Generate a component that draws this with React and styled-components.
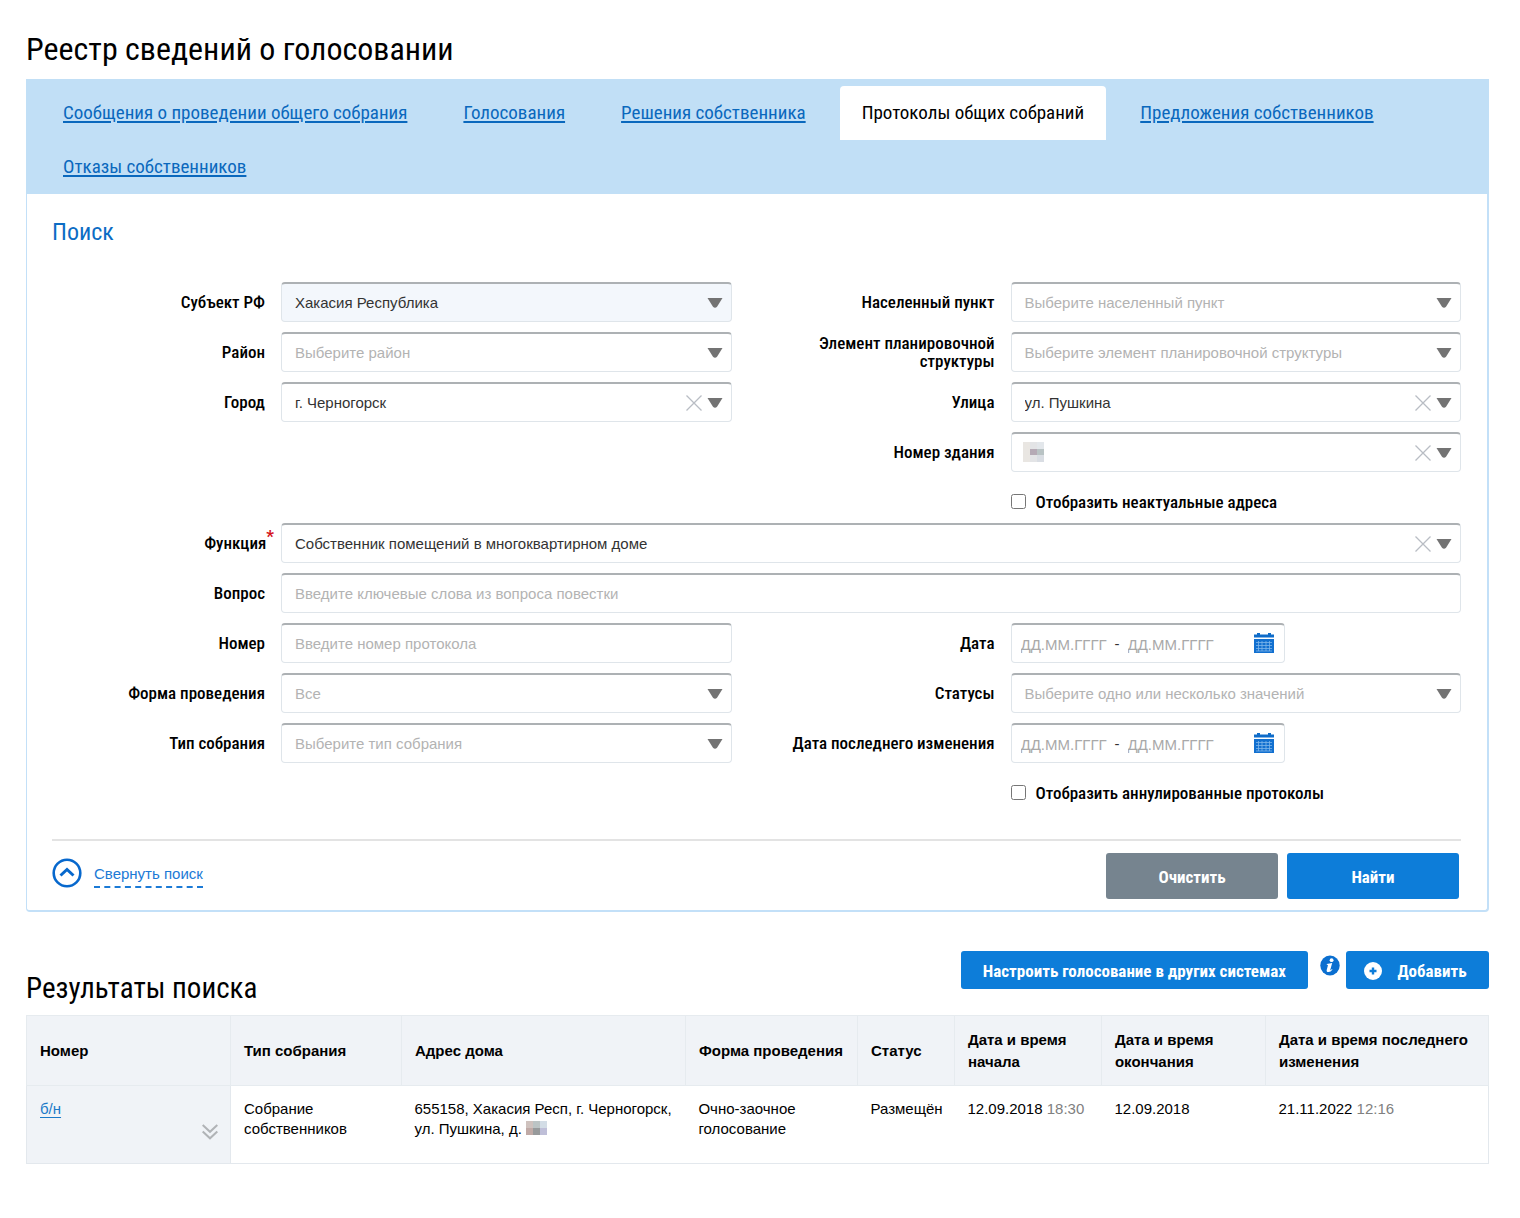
import React, { useId, useState } from "react";
import styled, { createGlobalStyle, css } from "styled-components";

const condensed = '"Roboto Condensed", Roboto, "Liberation Sans", sans-serif';
const sans = '"Liberation Sans", Arial, sans-serif';

const GlobalStyle = createGlobalStyle`
  *, *::before, *::after { box-sizing: border-box; }
  body { margin: 0; background: #fff; color: #000; font: 15px/20px ${sans}; }
  h1, h2, p { margin: 0; }
`;

const Page = styled.main`
  padding: 30px 31px 56px 26px;
`;

const PageTitle = styled.h1`
  font: 400 32px/38px ${condensed};
  margin-bottom: 11px;
`;

/* ---------- tabs ---------- */

const Tabs = styled.nav`
  display: flex;
  flex-wrap: wrap;
  column-gap: 12px;
  padding: 7px 15px 0;
  background: #c1dff6;
`;

const Tab = styled.a`
  padding: 0 22px;
  border-radius: 4px 4px 0 0;
  font: 400 19px/54px ${condensed};
  color: #0a68bd;
  text-decoration: underline;
  text-decoration-thickness: 2px;
  text-underline-offset: 2px;
  ${({ $active }) =>
    $active &&
    css`
      background: #fff;
      color: #000;
      text-decoration: none;
    `}
`;

/* ---------- search panel ---------- */

const SearchPanel = styled.form`
  padding: 24px 26px 11px 25px;
  border: solid #c3e0f8;
  border-width: 0 2px 2px 1px;
  border-radius: 0 0 4px 4px;
`;

const PanelTitle = styled.h2`
  margin-bottom: 36px;
  font: 400 24px/28px ${condensed};
  color: #0b6cc4;
`;

const Columns = styled.div`
  display: flex;
  gap: 16px;
`;

const Stack = styled.div`
  display: flex;
  flex-direction: column;
  gap: 10px;
  flex: 1 1 ${({ $basis }) => $basis || "auto"};
  min-width: 0;
`;

const Sections = styled.div`
  display: flex;
  flex-direction: column;
  gap: 10px;
  margin-bottom: 35px;
`;

const FieldRow = styled.div`
  display: grid;
  grid-template-columns: ${({ $label }) => $label}px minmax(0, 1fr);
  column-gap: 16px;
  align-items: center;
  min-height: 40px;
`;

const FieldLabel = styled.label`
  font: 500 17px/18px ${condensed};
  text-align: right;
`;

const Required = styled.sup`
  margin-right: -9px;
  font: 700 17px/0 ${condensed};
  color: #d4141c;
`;

const box = css`
  width: 100%;
  height: 40px;
  border: 1px solid #dfe5ea;
  border-top: 2px solid #adb1b4;
  border-radius: 4px;
  background: ${({ $filled }) => ($filled ? "#f3f7fc" : "#fff")};
`;

const control = css`
  ${box}
  padding: 0 13px;
  font: 15px/20px ${sans};
  color: ${({ $muted }) => ($muted ? "#b3b3b3" : "#333")};
`;

const TextInput = styled.input`
  ${control}
  &::placeholder { color: #b3b3b3; opacity: 1; }
`;

const SelectWrap = styled.div`
  position: relative;
`;

const Select = styled.select`
  ${control}
  appearance: none;
  display: block;
  padding-right: 52px;
`;

const SelectIcons = styled.span`
  position: absolute;
  inset: 1px 9px 0 auto;
  display: flex;
  align-items: center;
  gap: 5px;
  pointer-events: none;
`;

const ClearButton = styled.button`
  display: flex;
  padding: 0;
  border: 0;
  background: none;
  cursor: pointer;
  pointer-events: auto;
`;

const SelectMask = styled.span`
  position: absolute;
  left: 12px;
  top: 10px;
  display: flex;
`;

const DateBox = styled.div`
  ${box}
  display: flex;
  align-items: center;
  width: 274px;
  max-width: 100%;
  padding: 1px 10px 0 9px;
`;

const DateInput = styled.input`
  width: 90px;
  height: 24px;
  padding: 0;
  border: 0;
  background: none;
  font: 15px/20px ${sans};
  &::placeholder { color: #a9a9a9; opacity: 1; }
`;

const Dash = styled.span`
  width: 17px;
  padding-left: 4px;
  color: #333;
`;

const CalendarButton = styled.button`
  display: flex;
  margin-left: auto;
  padding: 0 0 2px;
  border: 0;
  background: none;
`;

const CheckRow = styled.div`
  display: flex;
  align-items: center;
  gap: 10px;
  height: 31px;
  padding: 8px 0 0 263px;
`;

const Checkbox = styled.input`
  width: 15px;
  height: 15px;
  margin: 0;
`;

const PanelFooter = styled.div`
  display: flex;
  align-items: center;
  justify-content: space-between;
  padding: 12px 2px 0 0;
  border-top: 2px solid #e3e3e3;
`;

const Collapse = styled.button`
  display: flex;
  align-items: center;
  gap: 12px;
  padding: 0 0 6px;
  border: 0;
  background: none;
  font: 15px/20px ${sans};
  color: #1b7ad6;
  cursor: pointer;
`;

const CollapseText = styled.span`
  padding: 5px 0 2px;
  border-bottom: 2px dashed #1b7ad6;
`;

const Actions = styled.div`
  display: flex;
  gap: 9px;
`;

const Button = styled.button`
  display: flex;
  align-items: center;
  justify-content: center;
  gap: 15px;
  height: ${({ $large }) => ($large ? 46 : 38)}px;
  min-width: ${({ $large }) => ($large ? 172 : 143)}px;
  padding: 2px 22px 0 ${({ $icon }) => ($icon ? 18 : 22)}px;
  border: 0;
  border-radius: 3px;
  background: ${({ $grey }) => ($grey ? "#76848f" : "#0d7dd9")};
  font: 700 17px/20px ${condensed};
  color: #fff;
  white-space: nowrap;
  cursor: pointer;
`;

/* ---------- results ---------- */

const ResultsHeader = styled.header`
  display: flex;
  justify-content: space-between;
  align-items: flex-start;
  margin: 39px 0 10px;
`;

const ResultsTitle = styled.h2`
  padding-top: 20px;
  font: 400 29px/34px ${condensed};
`;

const ResultsTools = styled.div`
  display: flex;
  align-items: flex-start;
`;

const InfoButton = styled.button`
  display: flex;
  padding: 4px 6px 0 12px;
  border: 0;
  background: none;
`;

const Table = styled.table`
  width: 100%;
  table-layout: fixed;
  border-collapse: collapse;
  border: 1px solid #e3e8ed;
`;

const Col = styled.col`
  width: ${({ $share }) => (($share / 1462) * 100).toFixed(3)}%;
`;

const HeadCell = styled.th`
  height: 70px;
  padding: 0 4px 0 13px;
  border: 1px solid #e6ebef;
  background: #f0f3f7;
  font: 700 15px/22px ${sans};
  text-align: left;
`;

const Cell = styled.td`
  height: 78px;
  padding: 13px 4px 0 13px;
  vertical-align: top;
  ${({ $tinted }) =>
    $tinted &&
    css`
      border-right: 1px solid #e3e8ed;
      background: #f0f3f7;
    `}
`;

const NumberCell = styled.div`
  display: flex;
  justify-content: space-between;
`;

const ExpandButton = styled.button`
  display: flex;
  padding: 25px 8px 0 0;
  border: 0;
  background: none;
`;

const RecordLink = styled.a`
  color: #1b7ac8;
  text-underline-offset: 3px;
`;

const Time = styled.span`
  color: #808080;
`;

const Mosaic = styled.svg`
  vertical-align: -1px;
`;

/* ---------- icons ---------- */

const Arrow = () => (
  <svg width="16" height="10" viewBox="0 0 16 10" aria-hidden="true">
    <path d="M.5 0h15L10 8.700Q8 10.600 6 8.700z" fill="#737373" />
  </svg>
);

const Cross = () => (
  <svg width="16" height="16" viewBox="0 0 16 16" aria-hidden="true">
    <path d="M.5.5l15 15M15.5.5l-15 15" stroke="#b9bdc4" strokeWidth="1.3" />
  </svg>
);

const Calendar = () => (
  <svg width="20" height="20" viewBox="0 0 20 20" aria-hidden="true">
    <path d="M0 1.5h3V0h3v1.5h8V0h3v1.5h3v3H0z" fill="#0f6cc9" />
    <path d="M0 6h20v14H0z" fill="#1270d0" />
    <path
      d="M2 9.5h16M2 12.5h16M2 15.5h16M2 18h16M4.500 8v10M8 8v10M12 8v10M15.5 8v10"
      stroke="#7db5ea"
      strokeWidth=".8"
    />
  </svg>
);

const ChevronCircle = () => (
  <svg width="30" height="30" viewBox="0 0 30 30" fill="none" stroke="#0768cd" aria-hidden="true">
    <circle cx="15" cy="15" r="13.3" strokeWidth="2.6" />
    <path d="M8.5 17.5L15 11.5l6.5 6" strokeWidth="3" />
  </svg>
);

const Info = () => (
  <svg width="20" height="21" viewBox="0 0 20 21" aria-hidden="true">
    <ellipse cx="10" cy="10.5" rx="9.7" ry="10" fill="#0b6fd0" />
    <circle cx="11.6" cy="5.2" r="1.9" fill="#fff" />
    <path
      d="M6.800 9c1.700-.3 3.600-.6 5.400-1l-1.900 6.800c-.2.900.5.600 1.600-.7l.6.5c-1.300 1.800-2.700 2.600-4.200 2.500-1.400-.1-1.900-.9-1.600-2.100l1.200-4.400c.1-.6-.2-.8-1.100-.8z"
      fill="#fff"
    />
  </svg>
);

const Plus = () => (
  <svg width="18" height="18" viewBox="0 0 18 18" aria-hidden="true">
    <circle cx="9" cy="9" r="9" fill="#fff" />
    <path d="M9 5.500v7M5.500 9h7" stroke="#0d7dd9" strokeWidth="2.400" />
  </svg>
);

const DoubleChevron = () => (
  <svg width="16" height="16" viewBox="0 0 16 16" fill="none" stroke="#b0b3b6" strokeWidth="2" aria-hidden="true">
    <path d="M.7 1L8 7.800 15.300 1M.7 7.500L8 14.300l7.300-6.800" />
  </svg>
);

const BuildingMask = () => (
  <svg width="21" height="20" viewBox="0 0 21 20" shapeRendering="crispEdges" aria-hidden="true">
    <path d="M0 0h21v20H0z" fill="#e3e4e6" />
    <path d="M0 0h7v20H0z" fill="#e9e6e2" />
    <path d="M14 0h7v7h-7z" fill="#e3e7eb" />
    <path d="M14 13h7v7h-7z" fill="#d9dde3" />
    <path d="M7 7h7v6H7z" fill="#b5aab5" />
    <path d="M14 7h7v6h-7z" fill="#b9c3c4" />
  </svg>
);

const HouseMask = () => (
  <Mosaic width="21" height="14" viewBox="0 0 21 14" shapeRendering="crispEdges" aria-hidden="true">
    <path d="M0 0h7v7H0z" fill="#cfc2be" />
    <path d="M7 0h7v7H7z" fill="#bcc4c4" />
    <path d="M14 0h7v7h-7z" fill="#d3dde6" />
    <path d="M0 7h7v7H0z" fill="#c0aaa6" />
    <path d="M7 7h7v7H7z" fill="#979a9b" />
    <path d="M14 7h7v7h-7z" fill="#bfbfd8" />
  </Mosaic>
);

/* ---------- fields ---------- */

const LEFT_LABEL = 213;
const RIGHT_LABEL = 247;

function SelectField({ label, labelWidth, value, placeholder, clearable, filled, required, mask }) {
  const id = useId();
  const [current, setCurrent] = useState(value || "");
  return (
    <FieldRow $label={labelWidth}>
      <FieldLabel htmlFor={id}>
        {label}
        {required && <Required>*</Required>}
      </FieldLabel>
      <SelectWrap>
        <Select
          id={id}
          value={current}
          $muted={!current}
          $filled={filled}
          onChange={(e) => setCurrent(e.target.value)}
        >
          <option value="">{placeholder || ""}</option>
          {value && <option>{value}</option>}
        </Select>
        {mask && <SelectMask>{mask}</SelectMask>}
        <SelectIcons>
          {clearable && (
            <ClearButton type="button" aria-label="Очистить поле" onClick={() => setCurrent("")}>
              <Cross />
            </ClearButton>
          )}
          <Arrow />
        </SelectIcons>
      </SelectWrap>
    </FieldRow>
  );
}

function TextField({ label, labelWidth, placeholder }) {
  const id = useId();
  return (
    <FieldRow $label={labelWidth}>
      <FieldLabel htmlFor={id}>{label}</FieldLabel>
      <TextInput id={id} placeholder={placeholder} />
    </FieldRow>
  );
}

function DateField({ label, labelWidth }) {
  const id = useId();
  return (
    <FieldRow $label={labelWidth}>
      <FieldLabel htmlFor={id}>{label}</FieldLabel>
      <DateBox>
        <DateInput id={id} placeholder="ДД.ММ.ГГГГ" />
        <Dash>-</Dash>
        <DateInput aria-label={`${label}, по`} placeholder="ДД.ММ.ГГГГ" />
        <CalendarButton type="button" aria-label="Открыть календарь">
          <Calendar />
        </CalendarButton>
      </DateBox>
    </FieldRow>
  );
}

function CheckField({ label }) {
  const id = useId();
  return (
    <CheckRow>
      <Checkbox type="checkbox" id={id} />
      <FieldLabel htmlFor={id}>{label}</FieldLabel>
    </CheckRow>
  );
}

/* ---------- data ---------- */

const tabs = [
  "Сообщения о проведении общего собрания",
  "Голосования",
  "Решения собственника",
  "Протоколы общих собраний",
  "Предложения собственников",
  "Отказы собственников",
];

const columns = [
  ["Номер", 204],
  ["Тип собрания", 171],
  ["Адрес дома", 284],
  ["Форма проведения", 172],
  ["Статус", 97],
  ["Дата и время начала", 147],
  ["Дата и время окончания", 164],
  ["Дата и время последнего изменения", 223],
];

export default function App() {
  return (
    <Page>
      <GlobalStyle />
      <PageTitle>Реестр сведений о голосовании</PageTitle>

      <Tabs>
        {tabs.map((name) => (
          <Tab key={name} href="#" $active={name === "Протоколы общих собраний"}>
            {name}
          </Tab>
        ))}
      </Tabs>

      <SearchPanel onSubmit={(e) => e.preventDefault()}>
        <PanelTitle>Поиск</PanelTitle>
        <Sections>
          <Columns>
            <Stack $basis="229px">
              <SelectField label="Субъект РФ" labelWidth={LEFT_LABEL} value="Хакасия Республика" filled />
              <SelectField label="Район" labelWidth={LEFT_LABEL} placeholder="Выберите район" />
              <SelectField label="Город" labelWidth={LEFT_LABEL} value="г. Черногорск" clearable />
            </Stack>
            <Stack $basis="263px">
              <SelectField label="Населенный пункт" labelWidth={RIGHT_LABEL} placeholder="Выберите населенный пункт" />
              <SelectField
                label={<>Элемент планировочной<br />структуры</>}
                labelWidth={RIGHT_LABEL}
                placeholder="Выберите элемент планировочной структуры"
              />
              <SelectField label="Улица" labelWidth={RIGHT_LABEL} value="ул. Пушкина" clearable />
              <SelectField label="Номер здания" labelWidth={RIGHT_LABEL} clearable mask={<BuildingMask />} />
              <CheckField label="Отобразить неактуальные адреса" />
            </Stack>
          </Columns>
          <Stack>
            <SelectField
              label="Функция"
              labelWidth={LEFT_LABEL}
              value="Собственник помещений в многоквартирном доме"
              clearable
              required
            />
            <TextField label="Вопрос" labelWidth={LEFT_LABEL} placeholder="Введите ключевые слова из вопроса повестки" />
          </Stack>
          <Columns>
            <Stack $basis="229px">
              <TextField label="Номер" labelWidth={LEFT_LABEL} placeholder="Введите номер протокола" />
              <SelectField label="Форма проведения" labelWidth={LEFT_LABEL} placeholder="Все" />
              <SelectField label="Тип собрания" labelWidth={LEFT_LABEL} placeholder="Выберите тип собрания" />
            </Stack>
            <Stack $basis="263px">
              <DateField label="Дата" labelWidth={RIGHT_LABEL} />
              <SelectField label="Статусы" labelWidth={RIGHT_LABEL} placeholder="Выберите одно или несколько значений" />
              <DateField label="Дата последнего изменения" labelWidth={RIGHT_LABEL} />
              <CheckField label="Отобразить аннулированные протоколы" />
            </Stack>
          </Columns>
        </Sections>
        <PanelFooter>
          <Collapse type="button">
            <ChevronCircle />
            <CollapseText>Свернуть поиск</CollapseText>
          </Collapse>
          <Actions>
            <Button type="reset" $large $grey>Очистить</Button>
            <Button type="submit" $large>Найти</Button>
          </Actions>
        </PanelFooter>
      </SearchPanel>

      <ResultsHeader>
        <ResultsTitle>Результаты поиска</ResultsTitle>
        <ResultsTools>
          <Button type="button">Настроить голосование в других системах</Button>
          <InfoButton type="button" aria-label="Справка">
            <Info />
          </InfoButton>
          <Button type="button" $icon>
            <Plus />
            Добавить
          </Button>
        </ResultsTools>
      </ResultsHeader>

      <Table>
        <colgroup>
          {columns.map(([name, share]) => (
            <Col key={name} $share={share} />
          ))}
        </colgroup>
        <thead>
          <tr>
            {columns.map(([name]) => (
              <HeadCell key={name} scope="col">{name}</HeadCell>
            ))}
          </tr>
        </thead>
        <tbody>
          <tr>
            <Cell $tinted>
              <NumberCell>
                <RecordLink href="#">б/н</RecordLink>
                <ExpandButton type="button" aria-label="Развернуть">
                  <DoubleChevron />
                </ExpandButton>
              </NumberCell>
            </Cell>
            <Cell>Собрание собственников</Cell>
            <Cell>655158, Хакасия Респ, г. Черногорск, ул. Пушкина, д. <HouseMask /></Cell>
            <Cell>Очно-заочное голосование</Cell>
            <Cell>Размещён</Cell>
            <Cell>12.09.2018 <Time>18:30</Time></Cell>
            <Cell>12.09.2018</Cell>
            <Cell>21.11.2022 <Time>12:16</Time></Cell>
          </tr>
        </tbody>
      </Table>
    </Page>
  );
}
